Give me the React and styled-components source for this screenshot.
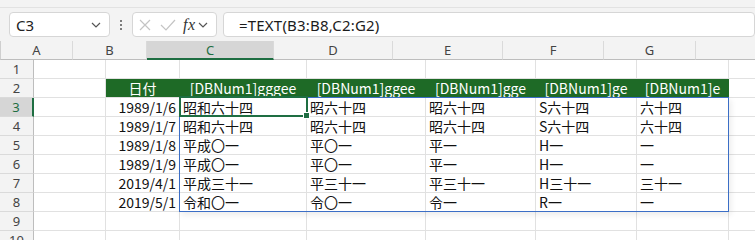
import React from 'react';
import styled, {createGlobalStyle} from 'styled-components';

const GlobalStyle = createGlobalStyle`
  html, body { margin: 0; padding: 0; background: #ffffff; overflow: hidden; }
  body { font-family: "Noto Sans", "Liberation Sans", sans-serif; }
`;

const COLS = [
    {key: 'A', width: 72},
    {key: 'B', width: 74},
    {key: 'C', width: 127},
    {key: 'D', width: 119},
    {key: 'E', width: 110},
    {key: 'F', width: 101},
    {key: 'G', width: 92},
    {key: 'H', width: 60, hidden: true},
];

const HEADERS = ['日付', '[DBNum1]gggee', '[DBNum1]ggee', '[DBNum1]gge', '[DBNum1]ge', '[DBNum1]e'];

const DATA = [
    ['1989/1/6', '昭和六十四', '昭六十四', '昭六十四', 'S六十四', '六十四'],
    ['1989/1/7', '昭和六十四', '昭六十四', '昭六十四', 'S六十四', '六十四'],
    ['1989/1/8', '平成〇一', '平〇一', '平一', 'H一', '一'],
    ['1989/1/9', '平成〇一', '平〇一', '平一', 'H一', '一'],
    ['2019/4/1', '平成三十一', '平三十一', '平三十一', 'H三十一', '三十一'],
    ['2019/5/1', '令和〇一', '令〇一', '令一', 'R一', '一'],
];

const ROW_H = 19;
const HEAD_W = 34;

const Page = styled.div`
  width: 755px;
  height: 240px;
  background: #f3f3f3;
  overflow: hidden;
`;

const FormulaBar = styled.div`
  display: flex;
  align-items: center;
  height: 34px;
  padding: 0 0 0 9px;
  margin-top: 7px;
  border-top: 1px solid #e2e2e2;
  box-sizing: border-box;
`;

const Box = styled.div`
  display: flex;
  align-items: center;
  height: 25px;
  box-sizing: border-box;
  background: #ffffff;
  border: 1px solid #d6d6d6;
  border-radius: 4px;
  width: ${p => p.$w ? `${p.$w}px` : 'auto'};
  flex: ${p => p.$grow ? 1 : 'none'};
  margin-right: ${p => p.$mr || 0}px;
  padding: ${p => p.$pad || '0'};
`;

const NameText = styled.span`
  flex: 1;
  font-size: 15px;
  color: #222;
  padding-left: 5px;
`;

const Dots = styled.div`
  width: 22px;
  display: flex;
  flex-direction: column;
  align-items: center;
  gap: 2px;
  span { width: 2px; height: 2px; background: #555; border-radius: 1px; }
`;

const Spacer = styled.span`
  width: ${p => p.$w}px;
  flex: none;
`;

const Fx = styled.span`
  font-family: "Liberation Serif", serif;
  font-style: italic;
  font-size: 16px;
  color: #333;
  margin: 0 2px 0 7px;
  letter-spacing: 0.5px;
`;

const FormulaText = styled.span`
  font-size: 15px;
  color: #1b1b1b;
  padding-left: 15px;
  letter-spacing: 0.2px;
`;

const Sheet = styled.div`
  position: relative;
  background: #ffffff;
`;

const Row = styled.div`
  display: flex;
  height: ${ROW_H}px;
`;

const Corner = styled.div`
  position: relative;
  width: ${HEAD_W}px;
  height: ${ROW_H}px;
  box-sizing: border-box;
  background: #f3f3f3;
  border-right: 1px solid #cfcfcf;
  border-bottom: 1px solid #bdbdbd;
  &::after {
    content: '';
    position: absolute;
    right: 4px;
    bottom: 3px;
    width: 0;
    height: 0;
    border-left: 10px solid transparent;
    border-bottom: 10px solid #d9d9d9;
  }
`;

const ColHead = styled.div`
  width: ${p => p.$w}px;
  height: ${ROW_H}px;
  box-sizing: border-box;
  flex: none;
  display: flex;
  align-items: center;
  justify-content: center;
  font-size: 13px;
  color: ${p => p.$active ? '#1e6e42' : '#444'};
  background: ${p => p.$active ? '#d6d6d6' : '#f3f3f3'};
  border-right: 1px solid #dadada;
  border-bottom: ${p => p.$active ? '2px solid #1e6e42' : '1px solid #bdbdbd'};
  padding-top: ${p => p.$active ? '1px' : '0'};
`;

const RowHead = styled.div`
  width: ${HEAD_W}px;
  height: ${ROW_H}px;
  box-sizing: border-box;
  flex: none;
  display: flex;
  align-items: center;
  justify-content: center;
  font-size: 13px;
  color: ${p => p.$active ? '#1e6e42' : '#444'};
  background: ${p => p.$active ? '#d6d6d6' : '#f3f3f3'};
  border-right: ${p => p.$active ? '2px solid #1e6e42' : '1px solid #bdbdbd'};
  border-bottom: 1px solid #dadada;
`;

const Cell = styled.div`
  width: ${p => p.$w}px;
  height: ${ROW_H}px;
  box-sizing: border-box;
  flex: none;
  display: flex;
  align-items: center;
  justify-content: ${p => p.$align === 'right' ? 'flex-end' : p.$align === 'center' ? 'center' : 'flex-start'};
  padding: 0 3px 0 3px;
  font-family: "Noto Sans CJK JP", "Noto Sans", sans-serif;
  font-size: 14px;
  white-space: nowrap;
  color: ${p => p.$head ? '#ffffff' : '#111'};
  background: ${p => p.$head ? '#1e6a26' : '#ffffff'};
  border-right: 1px solid ${p => p.$head ? '#1e6a26' : '#e1e1e1'};
  border-bottom: 1px solid #e1e1e1;
`;

const Range = styled.div`
  position: absolute;
  left: 179px;
  top: ${ROW_H * 3 - 1}px;
  width: 550px;
  height: ${ROW_H * 6 + 1}px;
  box-sizing: border-box;
  border: 1px solid #3b6ec6;
  box-shadow: 2px 3px 6px rgba(0, 0, 0, 0.08);
  pointer-events: none;
`;

const Active = styled.div`
  position: absolute;
  left: 179px;
  top: ${ROW_H * 3 - 2}px;
  width: 129px;
  height: ${ROW_H + 2}px;
  box-sizing: border-box;
  border: 2px solid #1e6e42;
  pointer-events: none;
  &::after {
    content: '';
    position: absolute;
    right: -4px;
    bottom: -4px;
    width: 5px;
    height: 5px;
    background: #1e6e42;
    border: 1px solid #ffffff;
  }
`;

const Chevron = () => (
    <svg width="10" height="6" viewBox="0 0 10 6" style={{flex: 'none'}}>
        <path d="M1 1l4 4 4-4" fill="none" stroke="#555" strokeWidth="1.2"/>
    </svg>
);

const CrossIcon = () => (
    <svg width="14" height="14" viewBox="0 0 14 14">
        <path d="M2 2l10 10M12 2L2 12" stroke="#c4c4c4" strokeWidth="1.2"/>
    </svg>
);

const CheckIcon = () => (
    <svg width="16" height="12" viewBox="0 0 16 12">
        <path d="M1 6l5 5L15 1" fill="none" stroke="#c4c4c4" strokeWidth="1.2"/>
    </svg>
);

const App = () => {
    const cellsFor = (r) => {
        const rowIndex = r - 2;
        return COLS.map((col, ci) => {
            const inTable = r >= 2 && r <= 8 && ci >= 1 && ci <= 6;
            let text = '';
            let align = 'left';
            if (r === 2 && inTable) {
                text = HEADERS[ci - 1];
                align = 'center';
            } else if (inTable) {
                text = DATA[rowIndex - 1][ci - 1];
                align = ci === 1 ? 'right' : 'left';
            }
            return (
                <Cell key={col.key} $w={col.width} $align={align} $head={r === 2 && inTable}>
                    {text}
                </Cell>
            );
        });
    };

    return (
        <Page>
            <GlobalStyle/>
            <FormulaBar>
                <Box $w={101} $pad="0 8px 0 1px">
                    <NameText>C3</NameText>
                    <Chevron/>
                </Box>
                <Dots><span/><span/><span/></Dots>
                <Box $w={85} $mr={6} $pad="0 0 0 5px">
                    <CrossIcon/>
                    <Spacer $w={8}/>
                    <CheckIcon/>
                    <Fx>fx</Fx>
                    <Chevron/>
                </Box>
                <Box $grow>
                    <FormulaText>=TEXT(B3:B8,C2:G2)</FormulaText>
                </Box>
            </FormulaBar>
            <Sheet>
                <Row>
                    <Corner/>
                    {COLS.map(col => (
                        <ColHead key={col.key} $w={col.width} $active={col.key === 'C'}>
                            {col.hidden ? '' : col.key}
                        </ColHead>
                    ))}
                </Row>
                {[1, 2, 3, 4, 5, 6, 7, 8, 9, 10].map(r => (
                    <Row key={r}>
                        <RowHead $active={r === 3}>{r}</RowHead>
                        {cellsFor(r)}
                    </Row>
                ))}
                <Range/>
                <Active/>
            </Sheet>
        </Page>
    );
};

export default App;
